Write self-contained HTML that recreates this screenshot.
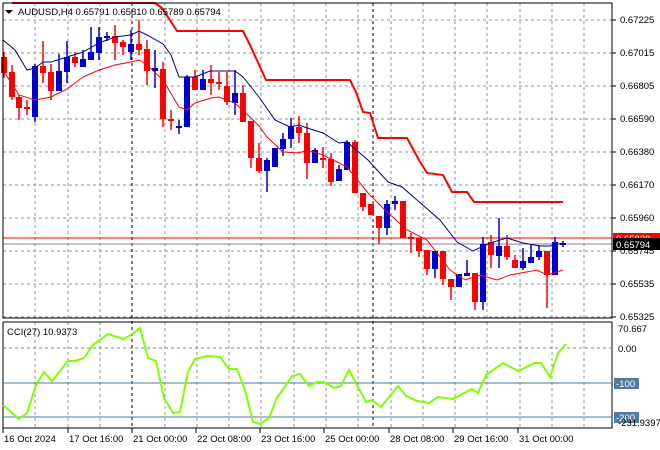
<!DOCTYPE html><html><head><meta charset="utf-8"><style>
html,body{margin:0;padding:0;background:#fff;width:660px;height:450px;overflow:hidden}
svg{display:block;font-family:"Liberation Sans",sans-serif;font-size:9.5px}
</style></head><body>
<svg id="s" width="660" height="450" xmlns="http://www.w3.org/2000/svg">
<rect width="660" height="450" fill="#fff"/>
<g id="grid"></g>
<line x1="132" y1="3" x2="132" y2="428" stroke="#000" stroke-dasharray="3,3"/>
<line x1="373" y1="3" x2="373" y2="428" stroke="#000" stroke-dasharray="3,3"/>
<polyline fill="none" stroke="#f00" stroke-width="2" points="12,3 155,3 162,8 177,31 243,31 250,45 266,80 350,80 356,92 363,112 370,113 378,138 407,138 419,160 427,173 443,175 452,192 467,192 474,202 563,202"/>
<line x1="3" y1="238" x2="612" y2="238" stroke="#f00"/>
<line x1="3" y1="244" x2="612" y2="244" stroke="#7a8a9a"/>
<g id="c"></g>
<polyline fill="none" stroke="#00008b" points="3,40 15,50 27,70 35,68 43,62 51,62 67,57 83,52 99,43 115,37 131,35 139,31 147,35 163,44 171,55 179,77 195,77 210,71 235,71 243,77 259,97 275,120 290,127 299,125 307,128 323,133 339,143 347,142 368,160 388,182 402,187 417,200 440,220 457,242 473,251 490,243 507,238 523,243 540,246 550,246 563,243"/>
<polyline fill="none" stroke="#f00" points="3,70 19,95 35,100 51,97 67,89 83,77 99,70 115,65 131,62 139,60 147,65 163,80 179,107 187,110 195,103 211,98 219,97 235,103 251,118 259,126 267,137 283,152 299,153 307,150 323,155 339,163 347,167 368,193 387,212 407,230 427,240 450,270 465,280 480,275 497,280 510,275 537,270 547,275 563,270"/>
<rect x="3" y="3" width="609" height="315" fill="none" stroke="#000"/>
<rect x="3" y="322" width="609" height="106" fill="none" stroke="#000"/>
<line x1="3" y1="348" x2="612" y2="348" stroke="#778899" stroke-dasharray="3,3"/>
<line x1="3" y1="383" x2="612" y2="383" stroke="#4f7ba0"/>
<line x1="3" y1="417" x2="612" y2="417" stroke="#4f7ba0"/>
<polyline fill="none" stroke="#7fff00" stroke-width="2" points="3,405 19,419 27,413 36,385 44,372 52,381 68,361 75,361 84,358 93,345 108,334 123,339 131,335 140,328 148,358 156,361 164,398 173,413 180,412 188,372 195,359 207,356 220,357 229,369 237,369 245,390 253,422 260,424 269,418 277,398 292,376 300,374 309,386 317,382 324,382 334,388 341,386 349,370 366,402 372,400 381,407 398,386 406,396 417,401 429,403 438,397 453,399 472,389 478,393 486,375 503,363 518,371 535,363 541,363 550,377 558,353 566,344"/>
<polygon points="5,10 13,10 9,14" fill="#000"/>
<text x="18" y="15" fill="#000">AUDUSD,H4  0.65791 0.65810 0.65789 0.65794</text>
<text x="7" y="335" fill="#000">CCI(27) 10.9373</text>
<g id="ax" fill="#000"></g>
<rect x="613" y="233" width="47" height="10" fill="#f00"/>
<text x="616" y="242" fill="#fff">0.65828</text>
<rect x="613" y="238" width="47" height="12" fill="#000"/>
<text x="616" y="248" fill="#fff">0.65794</text>
<rect x="614" y="378" width="25" height="11" fill="#4f7ba0"/>
<text x="616" y="387" fill="#fff">-100</text>
<rect x="614" y="412" width="25" height="11" fill="#4f7ba0"/>
<text x="616" y="421" fill="#fff">-200</text>
<text x="618" y="426" fill="#000">-231.9397</text>
<text x="618" y="332" fill="#000">70.667</text>
<text x="618" y="352" fill="#000">0.00</text>
</svg>
<script>
var NS="http://www.w3.org/2000/svg";
function el(p,t,a){var e=document.createElementNS(NS,t);for(var k in a)e.setAttribute(k,a[k]);p.appendChild(e);return e;}
var g=document.getElementById("grid");
for(var k=1;k<19;k++){var x=Math.round(3+32.3*k);if(x==132)continue;el(g,"line",{x1:x,y1:3,x2:x,y2:318,stroke:"#8896a4","stroke-dasharray":"3,3"});el(g,"line",{x1:x,y1:322,x2:x,y2:428,stroke:"#8896a4","stroke-dasharray":"3,3"});}
var P=[["0.67225",20],["0.67015",53],["0.66805",86],["0.66590",119],["0.66380",152],["0.66170",185],["0.65960",218],["0.65745",251],["0.65535",284],["0.65325",317]];
var ax=document.getElementById("ax");
P.forEach(function(p){el(g,"line",{x1:3,y1:p[1],x2:612,y2:p[1],stroke:"#8896a4","stroke-dasharray":"3,3"});el(ax,"line",{x1:612,y1:p[1],x2:616,y2:p[1],stroke:"#000"});var t=el(ax,"text",{x:620,y:p[1]+3});t.textContent=p[0];});
var L=[["16 Oct 2024",3],["17 Oct 16:00",68],["21 Oct 00:00",132],["22 Oct 08:00",196],["23 Oct 16:00",260],["25 Oct 00:00",324],["28 Oct 08:00",389],["29 Oct 16:00",453],["31 Oct 00:00",518]];
L.forEach(function(l){el(ax,"line",{x1:l[1],y1:428,x2:l[1],y2:433,stroke:"#000"});var t=el(ax,"text",{x:l[1]+1,y:442});t.textContent=l[0];});
// x, color(r/b), bodyTop, bodyBot, wickTop, wickBot
var C=[[4,'r',57,73,52,78],[12,'r',72,97,65,100],[19,'r',97,108,95,120],[27,'r',107,109,100,115],[35,'b',66,117,64,122],[43,'r',66,73,41,83],[51,'r',72,91,64,100],[59,'b',71,91,54,91],[67,'b',57,72,41,83],[75,'r',57,63,52,67],[83,'b',59,67,50,67],[91,'b',52,60,27,60],[99,'b',37,53,27,60],[107,'b',36,37,32,41],[115,'r',36,43,25,60],[123,'r',42,47,40,55],[131,'b',44,52,30,60],[139,'r',44,50,20,55],[147,'r',49,71,40,85],[155,'b',68,71,50,88],[163,'r',69,119,62,127],[171,'r',119,121,110,130],[179,'b',126,128,120,134],[187,'b',77,127,75,127],[195,'r',77,90,70,90],[203,'b',79,90,70,90],[211,'r',79,83,65,95],[219,'r',82,84,72,90],[227,'r',86,102,72,105],[235,'b',93,103,70,115],[243,'r',93,122,85,122],[251,'r',121,158,121,168],[259,'r',158,171,143,173],[267,'b',160,171,158,192],[275,'b',148,167,148,167],[283,'b',139,149,133,156],[291,'b',126,139,118,148],[299,'r',127,133,116,143],[307,'r',133,163,123,179],[315,'b',150,163,148,163],[323,'r',158,159,147,168],[331,'r',159,182,153,186],[339,'b',169,181,165,181],[347,'b',142,170,140,170],[355,'r',142,193,140,193],[363,'r',193,207,193,211],[371,'r',204,215,204,215],[379,'r',216,228,216,244],[387,'b',204,228,200,235],[395,'b',201,204,196,210],[403,'r',201,238,201,238],[411,'r',237,239,233,253],[419,'r',238,251,238,257],[427,'r',250,269,250,275],[435,'b',251,269,251,278],[443,'r',251,279,251,285],[451,'r',279,287,280,300],[459,'b',274,287,274,287],[467,'b',273,276,260,276],[475,'r',273,302,273,310],[483,'b',244,302,237,310],[491,'r',242,255,235,268],[499,'b',246,256,218,268],[507,'r',246,257,235,260],[515,'r',260,268,255,268],[523,'b',261,268,248,270],[531,'b',257,263,245,263],[539,'b',251,257,245,260],[547,'r',251,275,251,308],[555,'b',242,275,237,275],[563,'b',243,245,241,247]];
var cg=document.getElementById("c");
C.forEach(function(c){var col=c[1]=='r'?'#f00':'#0000cd';el(cg,"line",{x1:c[0],y1:c[4],x2:c[0],y2:c[5],stroke:col,"stroke-width":1.5});el(cg,"rect",{x:c[0]-3,y:c[2],width:6,height:Math.max(2,c[3]-c[2]),fill:col});});
</script>
</body></html>
